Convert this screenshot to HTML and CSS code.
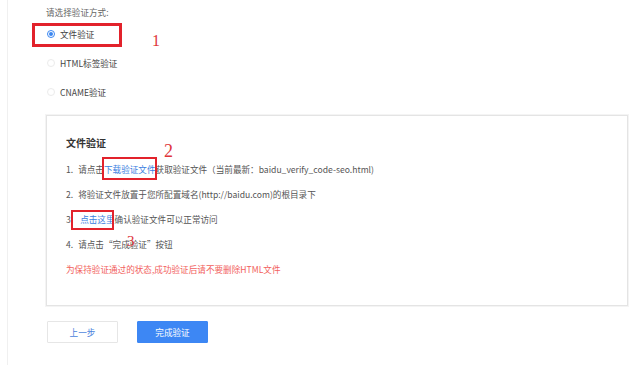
FILE: index.html
```html
<!DOCTYPE html>
<html lang="zh">
<head>
<meta charset="utf-8">
<title>文件验证</title>
<link rel="stylesheet" href="styles.css">
</head>
<body>
<div class="page">
  <div class="main">
    <div class="prompt">请选择验证方式:</div>
    <div class="options">
      <div class="option"><span class="radio checked"></span><span class="label">文件验证</span></div>
      <div class="option"><span class="radio"></span><span class="label">HTML标签验证</span></div>
      <div class="option"><span class="radio"></span><span class="label">CNAME验证</span></div>
    </div>
    <div class="card">
      <div class="card-title">文件验证</div>
      <div class="step"><span class="no">1.</span>请点击<a class="link">下载验证文件</a>获取验证文件（当前最新：baidu_verify_code-seo.html)</div>
      <div class="step"><span class="no">2.</span>将验证文件放置于您所配置域名(http://baidu.com)的根目录下</div>
      <div class="step"><span class="no">3.</span><a class="link link-gap">点击这里</a>确认验证文件可以正常访问</div>
      <div class="step"><span class="no">4.</span>请点击“完成验证”按钮</div>
      <div class="warn">为保持验证通过的状态,成功验证后请不要删除HTML文件</div>
    </div>
    <div class="actions">
      <button class="btn btn-ghost">上一步</button>
      <button class="btn btn-primary">完成验证</button>
    </div>
  </div>
  <div class="mark box1"></div>
  <div class="mark box2"></div>
  <div class="mark box3"></div>
  <div class="num num1">1</div>
  <div class="num num2">2</div>
  <div class="num num3">3</div>
</div>
</body>
</html>
```

FILE: styles.css
```css
html, body {
  margin: 0;
  padding: 0;
  background: #fff;
}
body {
  font-family: "Noto Sans CJK SC", "Noto Sans", sans-serif;
  font-size: 8.6px;
  color: #555;
}
.page {
  position: relative;
  width: 640px;
  height: 365px;
  overflow: hidden;
}
.main {
  margin-left: 7px;
  border-left: 1px solid #f0f0f0;
  height: 365px;
  padding-left: 38px;
  box-sizing: border-box;
}
.prompt {
  padding-top: 5px;
  line-height: 14px;
  color: #666;
}
.options {
  display: flex;
  flex-direction: column;
}
.option {
  height: 29px;
  display: flex;
  align-items: center;
  padding-left: 1px;
}
.radio {
  width: 8px;
  height: 8px;
  border: 1px solid #ebebeb;
  border-radius: 50%;
  box-sizing: border-box;
  margin-right: 5px;
  display: flex;
  align-items: center;
  justify-content: center;
}
.radio.checked {
  border-color: #3a86f0;
}
.radio.checked::after {
  content: "";
  width: 4px;
  height: 4px;
  border-radius: 50%;
  background: #3a86f0;
}
.label {
  color: #444;
}
.card {
  margin-top: 9px;
  width: 582px;
  box-sizing: border-box;
  border: 1px solid #e4e4e4;
  box-shadow: 0 0 0 1px #f4f4f4;
  padding: 17px 19px 23px 19px;
}
.card-title {
  font-size: 10px;
  font-weight: bold;
  color: #333;
  line-height: 20px;
  margin-bottom: 4px;
}
.step {
  line-height: 25px;
  color: #555;
}
.no {
  display: inline-block;
  margin-right: 5px;
}
.link {
  color: #3a7ee0;
}
.link-gap {
  margin-left: 2px;
}
.warn {
  line-height: 25px;
  color: #f2615d;
}
.actions {
  margin-top: 15px;
  display: flex;
  gap: 19px;
  padding-left: 1px;
}
.btn {
  width: 71px;
  height: 22px;
  font-family: inherit;
  font-size: 8.6px;
  border-radius: 1px;
  padding: 0;
}
.btn-ghost {
  background: #fff;
  border: 1px solid #e6e6e6;
  color: #4a7fdc;
}
.btn-primary {
  background: #3d87f4;
  border: 1px solid #3d87f4;
  color: #fff;
}
.mark {
  position: absolute;
  box-sizing: border-box;
  border-style: solid;
  border-color: #e2222b;
}
.box1 {
  left: 32px;
  top: 23px;
  width: 90px;
  height: 24px;
  border-width: 3px;
}
.box2 {
  left: 102px;
  top: 157px;
  width: 55px;
  height: 23px;
  border-width: 2px;
}
.box3 {
  left: 71px;
  top: 210px;
  width: 43px;
  height: 20px;
  border-width: 2px;
}
.num {
  position: absolute;
  font-family: "Liberation Serif", serif;
  color: #e0353a;
  line-height: 1;
}
.num1 {
  left: 152px;
  top: 33px;
  font-size: 16px;
}
.num2 {
  left: 164px;
  top: 142px;
  font-size: 18px;
}
.num3 {
  left: 127px;
  top: 234px;
  font-size: 15px;
}
```
